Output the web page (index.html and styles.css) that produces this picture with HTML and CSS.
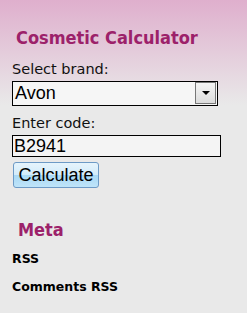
FILE: index.html
```html
<!DOCTYPE html>
<html lang="en">
<head>
<meta charset="UTF-8">
<title>Cosmetic Calculator</title>
<link rel="stylesheet" href="styles.css">
</head>
<body>
<div id="sidebar">
    <div class="widget calc">
        <h2 class="title">Cosmetic Calculator</h2>
        <form class="calc-form">
            <label class="label" for="brand">Select brand:</label>
            <div class="select">
                <span class="select-value">Avon</span>
                <span class="select-btn"><i class="arrow"></i></span>
            </div>
            <label class="label" for="code">Enter code:</label>
            <input class="code" id="code" type="text" value="B2941">
            <button class="btn" type="button">Calculate</button>
        </form>
    </div>
    <div class="widget meta">
        <h2 class="title">Meta</h2>
        <ul class="links">
            <li><a href="#">RSS</a></li>
            <li><a href="#">Comments RSS</a></li>
        </ul>
    </div>
</div>
</body>
</html>
```
FILE: styles.css
```css
html {background: #e9e9e9;}
body {margin: 0;min-height: 313px;background: linear-gradient(#dfafcd 0, #e9e9e9 105px) no-repeat;font-family: "DejaVu Sans", sans-serif;}
#sidebar {padding: 27px 0 0 12px;}
.title {margin: 0 0 12px 4px;font: bold 18px/21px "DejaVu Sans Condensed", "DejaVu Sans", sans-serif;color: #9c216a;}
.calc-form {display: flex;flex-direction: column;align-items: flex-start;}
.label {font-size: 14.5px;line-height: 18px;color: #111;margin-bottom: 3px;}
.select {display: flex;width: 204px;height: 23px;border: 1px solid #000;background: #f6f6f6;margin-bottom: 8px;}
.select-value {flex: 1;font: 18px/23px "Liberation Sans", sans-serif;padding-left: 2px;color: #000;}
.select-btn {display: flex;align-items: center;justify-content: center;width: 19px;height: 20px;margin: 0 1px 0 0;border: 1px solid #777;background: linear-gradient(#f4f4f4, #dcdcdc);}
.arrow {width: 0;height: 0;border-left: 4px solid transparent;border-right: 4px solid transparent;border-top: 4px solid #000;}
.code {box-sizing: border-box;width: 209px;height: 22px;margin: 0 0 5px;padding: 0 1px;border: 1px solid #000;background: #f4f4f4;font: 18px/20px "Liberation Sans", sans-serif;color: #000;}
.btn {box-sizing: border-box;width: 86px;height: 26px;margin-left: 1px;padding: 0;border: 1px solid #6d9ac6;border-radius: 3px;background: linear-gradient(#e6f4fc 0, #d2ebfa 50%, #a9d9f5 51%, #bfe4f9 100%);font: 18px/22px "Liberation Sans", sans-serif;color: #000;}
.meta {margin-top: 31px;}
.meta .title {margin: 0 0 10px 6px;}
.links {margin: 0;padding: 0;list-style: none;}
.links li {margin-bottom: 11px;font: bold 12.5px/17px "DejaVu Sans", sans-serif;}
.links a {color: #000;text-decoration: none;}
```
